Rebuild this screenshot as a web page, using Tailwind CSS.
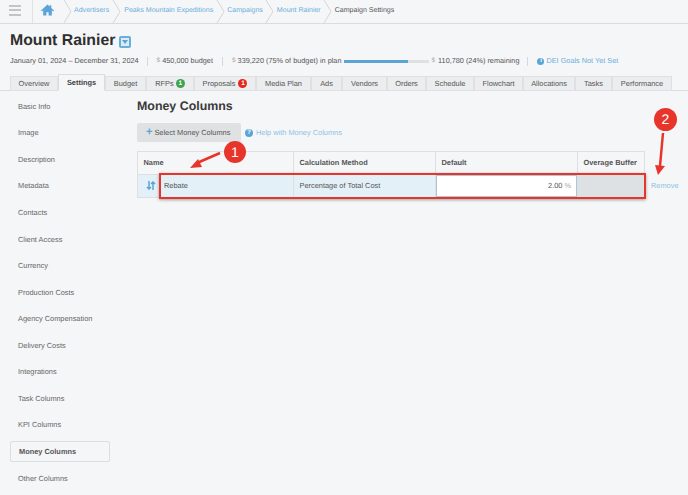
<!DOCTYPE html>
<html lang="en">
<head>
  <meta charset="UTF-8">
  <title>Campaign Settings</title>
  <script src="https://cdn.jsdelivr.net/npm/@tailwindcss/browser@4"></script>
</head>
<body class="relative w-[688px] h-[495px] overflow-hidden bg-[#f5f6f8] text-[#555] font-['Liberation_Sans',Arial,sans-serif] text-[7.4px] [text-rendering:geometricPrecision]">

  <!-- breadcrumb bar -->
  <nav class="flex items-center h-[24px] border-b border-[#dcdcdc] text-[#6aaedb] text-[7.05px] font-normal">
    <div class="w-[33px] h-full flex flex-col justify-center gap-[2.5px] pl-[9px] pr-[11px] pb-[3px] border-r border-[#e2e2e2]">
      <span class="block h-[2px] bg-[#c4c4c4]"></span>
      <span class="block h-[2px] bg-[#c4c4c4]"></span>
      <span class="block h-[2px] bg-[#c4c4c4]"></span>
    </div>
    <svg class="ml-[8px] w-[13px] h-[12px] -mt-[3px]" viewBox="0 0 24 22" fill="#5aa5d6"><path d="M12 1 0 12l1.6 1.8L4 11.6V21h6v-6h4v6h6v-9.4l2.4 2.2L24 12l-5-4.6V2h-3v2.7z"/></svg>
    <svg class="ml-[9px] w-[9px] h-[23px]" viewBox="0 0 9 23" fill="none" stroke="#d5d5d5"><path d="M1 0l7 11.5L1 23"/></svg>
    <span class="ml-[2px]">Advertisers</span>
    <svg class="ml-[3px] w-[9px] h-[23px]" viewBox="0 0 9 23" fill="none" stroke="#d5d5d5"><path d="M1 0l7 11.5L1 23"/></svg>
    <span class="ml-[3px]">Peaks Mountain Expeditions</span>
    <svg class="ml-[3px] w-[9px] h-[23px]" viewBox="0 0 9 23" fill="none" stroke="#d5d5d5"><path d="M1 0l7 11.5L1 23"/></svg>
    <span class="ml-[2px]">Campaigns</span>
    <svg class="ml-[2px] w-[9px] h-[23px]" viewBox="0 0 9 23" fill="none" stroke="#d5d5d5"><path d="M1 0l7 11.5L1 23"/></svg>
    <span class="ml-[3px]">Mount Rainier</span>
    <svg class="ml-[2px] w-[9px] h-[23px]" viewBox="0 0 9 23" fill="none" stroke="#d5d5d5"><path d="M1 0l7 11.5L1 23"/></svg>
    <span class="ml-[3px] text-[#555]">Campaign Settings</span>
  </nav>

  <!-- campaign header -->
  <header class="pl-[10px] pt-[7px]">
    <div class="flex items-center h-[20px]">
      <h1 class="text-[15.8px] leading-[20px] font-bold text-[#2f2f2f]">Mount Rainier</h1>
      <span class="ml-[4px] mt-[2px] w-[12px] h-[12px] rounded-[2px] border-2 border-[#6aaedb] bg-[#dcecf6] flex items-center justify-center">
        <span class="block w-0 h-0 border-x-[3px] border-x-transparent border-t-[4px] border-t-[#5aa5d6]"></span>
      </span>
    </div>
    <div class="flex items-center h-[12px] mt-[4px] text-[7.3px] text-[#555] whitespace-nowrap">
      <span>January 01, 2024 – December 31, 2024</span>
      <span class="ml-[8px] w-px h-[9px] bg-[#d8d8d8]"></span>
      <span class="ml-[9px] text-[#aaa] text-[6.5px]">$</span>
      <span class="ml-[2px]">450,000 budget</span>
      <span class="ml-[9px] w-px h-[9px] bg-[#d8d8d8]"></span>
      <span class="ml-[9px] text-[#aaa] text-[6.5px]">$</span>
      <span class="ml-[2px]">339,220 (75% of budget) in plan</span>
      <span class="ml-[3px] w-[85px] h-[3px] bg-[#e0e0e0] flex"><span class="block w-[64px] h-full bg-[#5aa5d6]"></span></span>
      <span class="ml-[2px] text-[#aaa] text-[6.5px]">$</span>
      <span class="ml-[3px]">110,780 (24%) remaining</span>
      <span class="ml-[8px] w-px h-[9px] bg-[#d8d8d8]"></span>
      <span class="ml-[9px] w-[7px] h-[7px] rounded-full bg-[#5aa5d6] text-white text-[6px] leading-[7px] text-center font-bold">i</span>
      <span class="ml-[2px] text-[#6aaedb]">DEI Goals Not Yet Set</span>
    </div>
    <!-- tabs -->
    <div class="flex items-end h-[17px] mt-[7px] -ml-[10px] pl-[10px] border-b border-[#dcdcdc] text-[#555]">
      <span class="w-[48px] h-[15px] -mb-px flex items-center justify-center bg-[#ebedef] border border-[#e0e0e0]">Overview</span>
      <span class="w-[47px] h-[17px] -mb-px flex items-center justify-center bg-[#f5f6f8] border border-[#dcdcdc] border-b-[#f5f6f8] font-bold text-[#444]">Settings</span>
      <span class="w-[41px] h-[15px] -mb-px flex items-center justify-center bg-[#ebedef] border border-[#e0e0e0]">Budget</span>
      <span class="w-[48px] h-[15px] -mb-px flex items-center justify-center gap-[2px] bg-[#ebedef] border border-[#e0e0e0]">RFPs <span class="w-[9px] h-[9px] rounded-full bg-[#3fa34d] text-white text-[6.5px] leading-[9px] text-center font-bold">1</span></span>
      <span class="w-[62px] h-[15px] -mb-px flex items-center justify-center gap-[3px] bg-[#ebedef] border border-[#e0e0e0]">Proposals <span class="w-[9px] h-[9px] rounded-full bg-[#e8261c] text-white text-[6.5px] leading-[9px] text-center font-bold">1</span></span>
      <span class="w-[55px] h-[15px] -mb-px flex items-center justify-center bg-[#ebedef] border border-[#e0e0e0]">Media Plan</span>
      <span class="w-[31px] h-[15px] -mb-px flex items-center justify-center bg-[#ebedef] border border-[#e0e0e0]">Ads</span>
      <span class="w-[45px] h-[15px] -mb-px flex items-center justify-center bg-[#ebedef] border border-[#e0e0e0]">Vendors</span>
      <span class="w-[39px] h-[15px] -mb-px flex items-center justify-center bg-[#ebedef] border border-[#e0e0e0]">Orders</span>
      <span class="w-[48px] h-[15px] -mb-px flex items-center justify-center bg-[#ebedef] border border-[#e0e0e0]">Schedule</span>
      <span class="w-[49px] h-[15px] -mb-px flex items-center justify-center bg-[#ebedef] border border-[#e0e0e0]">Flowchart</span>
      <span class="w-[52px] h-[15px] -mb-px flex items-center justify-center bg-[#ebedef] border border-[#e0e0e0]">Allocations</span>
      <span class="w-[37px] h-[15px] -mb-px flex items-center justify-center bg-[#ebedef] border border-[#e0e0e0]">Tasks</span>
      <span class="w-[60px] h-[15px] -mb-px flex items-center justify-center bg-[#ebedef] border border-[#e0e0e0]">Performance</span>
    </div>
  </header>

  <div class="flex">
    <!-- settings sidebar -->
    <aside class="w-[137px] pl-[10px] pt-[2px] shrink-0">
      <ul class="w-[100px] text-[#666]">
        <li class="h-[26.57px] pl-[8px] flex items-center">Basic Info</li>
        <li class="h-[26.57px] pl-[8px] flex items-center">Image</li>
        <li class="h-[26.57px] pl-[8px] flex items-center">Description</li>
        <li class="h-[26.57px] pl-[8px] flex items-center">Metadata</li>
        <li class="h-[26.57px] pl-[8px] flex items-center">Contacts</li>
        <li class="h-[26.57px] pl-[8px] flex items-center">Client Access</li>
        <li class="h-[26.57px] pl-[8px] flex items-center">Currency</li>
        <li class="h-[26.57px] pl-[8px] flex items-center">Production Costs</li>
        <li class="h-[26.57px] pl-[8px] flex items-center">Agency Compensation</li>
        <li class="h-[26.57px] pl-[8px] flex items-center">Delivery Costs</li>
        <li class="h-[26.57px] pl-[8px] flex items-center">Integrations</li>
        <li class="h-[26.57px] pl-[8px] flex items-center">Task Columns</li>
        <li class="h-[26.57px] pl-[8px] flex items-center">KPI Columns</li>
        <li class="h-[21px] my-[3px] pl-[8px] flex items-center font-bold text-[#555] border border-[#dcdee0] rounded-[2px]">Money Columns</li>
        <li class="h-[26.57px] pl-[8px] flex items-center">Other Columns</li>
      </ul>
    </aside>

    <!-- money columns panel -->
    <main class="flex-1 pt-[7px]">
      <h2 class="text-[12.4px] leading-[16px] font-bold text-[#3a3a3a]">Money Columns</h2>
      <div class="flex items-center mt-[9px]">
        <span class="w-[104px] h-[19px] pl-[9px] rounded-[2px] bg-[#dfe1e3] flex items-center text-[#555]"><span class="text-[#5aa5d6] text-[11px] font-bold leading-none mr-[2px]">+</span>Select Money Columns</span>
        <span class="ml-[4px] w-[8px] h-[8px] rounded-full bg-[#5aa5d6] text-white text-[6.5px] leading-[8px] text-center font-bold">?</span>
        <span class="ml-[3px] text-[#8fc2e4]">Help with Money Columns</span>
      </div>
      <div class="mt-[9px] flex items-start">
        <table class="w-[508px] table-fixed border-collapse border border-[#dddfe1]">
          <thead>
            <tr class="h-[23px] font-bold text-[#555] text-left">
              <th class="w-[156px] pl-[5.5px] border border-[#dddfe1]">Name</th>
              <th class="w-[142px] pl-[5.5px] border border-[#dddfe1]">Calculation Method</th>
              <th class="w-[142px] pl-[5.5px] border border-[#dddfe1]">Default</th>
              <th class="pl-[5.5px] border border-[#dddfe1]">Overage Buffer</th>
            </tr>
          </thead>
          <tbody>
            <tr class="h-[23px] bg-[#e4f0f7]">
              <td class="border border-[#dddfe1] p-0">
                <div class="flex items-center">
                  <svg class="ml-[8px] w-[10px] h-[9px]" viewBox="0 0 10 9" fill="none" stroke="#5aa5d6" stroke-width="1.5"><path d="M3 0v8M1 6l2 2 2-2M7 9V1M5 3l2-2 2 2"/></svg>
                  <span class="ml-[8px]">Rebate</span>
                </div>
              </td>
              <td class="pl-[5.5px] border border-[#dddfe1]">Percentage of Total Cost</td>
              <td class="p-0 border border-[#dddfe1]">
                <div class="h-[22px] bg-white border border-[#a9c6da] flex items-center justify-end pr-[5px]">2.00 <span class="ml-[2px] text-[#aaa]">%</span></div>
              </td>
              <td class="bg-[#dde1e3] border border-[#dddfe1]"></td>
            </tr>
          </tbody>
        </table>
        <span class="ml-[6px] mt-[29px] text-[#8fc2e4]">Remove</span>
      </div>
    </main>
  </div>

  <!-- annotations drawn over the page -->
  <div class="absolute left-[159px] top-[173px] w-[487px] h-[26px] border-2 border-[#e8352b] shadow-[0_1px_3px_rgba(0,0,0,0.35)]"></div>
  <svg class="absolute left-0 top-0 w-[688px] h-[495px] pointer-events-none" viewBox="0 0 688 495" fill="none">
    <path d="M220 153 197 163" stroke="#e8352b" stroke-width="2.5"/>
    <path d="M190 168 198 159 202 167z" fill="#e8352b"/>
    <path d="M663 133 660 166" stroke="#e8352b" stroke-width="2.5"/>
    <path d="M655 165 665 166 658 175z" fill="#e8352b"/>
  </svg>
  <div class="absolute left-[224px] top-[141px] w-[22px] h-[22px] rounded-full bg-[#e8352b] text-white text-[14px] leading-[22px] text-center">1</div>
  <div class="absolute left-[654px] top-[108px] w-[23px] h-[23px] rounded-full bg-[#e8352b] text-white text-[14px] leading-[23px] text-center">2</div>
</body>
</html>
